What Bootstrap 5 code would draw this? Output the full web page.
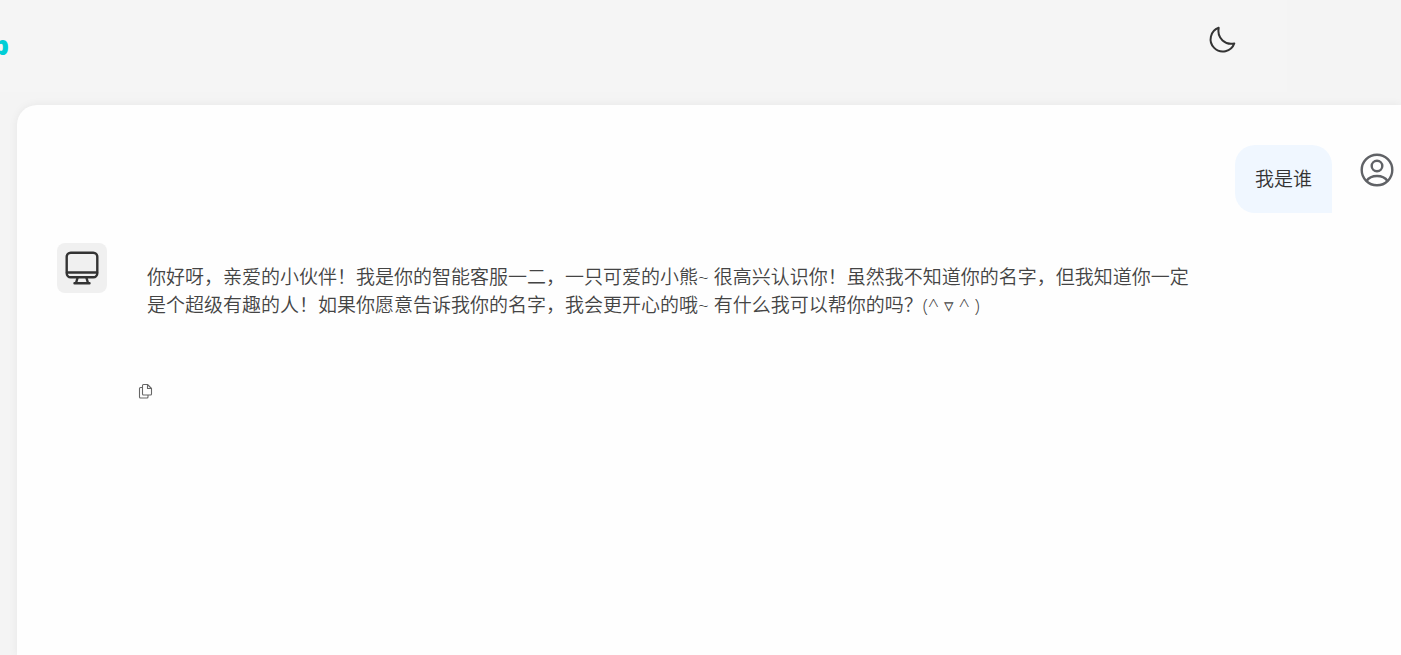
<!DOCTYPE html>
<html lang="zh-CN">
<head>
<meta charset="utf-8">
<meta name="viewport" content="width=device-width, initial-scale=1">
<title>智能客服</title>
<link href="https://cdn.jsdelivr.net/npm/bootstrap@5.3.0/dist/css/bootstrap.min.css" rel="stylesheet">
<style>
body{background:#f4f4f4;color:#333;font-family:"Open Sans","Noto Sans CJK SC",sans-serif;font-size:19px;line-height:28px}
.topbar{height:92px;background:#f5f5f5;margin-right:114px;padding-right:50px}
.brand{width:9px;color:#00ced6;font-size:26px;font-weight:800;line-height:28px;padding-bottom:2px;text-decoration:none}
.icon-btn{border:0;background:none;padding:0;line-height:0;color:#333}
.chat{margin:13px 0 0 17px;padding:40px 7px 24px 40px;background:#fefefe;border-top-left-radius:20px;box-shadow:0 0 10px rgba(0,0,0,.06)}
.bubble{background:#f0f7ff;border-radius:20px 20px 0 20px;padding:20px}
.message-text{font-weight:350;color:#333}
.answer{margin-top:30px;gap:20px}
.avatar{width:50px;height:50px;background:#f0f0f0;border-radius:8px}
.reply{max-width:1092px;padding:20px;color:#444}
.user-icon{margin:8px 0 0 28px;color:#606266;line-height:0}
.copy{margin:44px 0 0 81px;color:#666}
</style>
</head>
<body class="min-vh-100 d-flex flex-column overflow-x-hidden">
<header class="topbar d-flex justify-content-between">
  <a class="brand d-flex justify-content-end align-self-center" href="#">p</a>
  <button class="icon-btn align-self-start mt-4" type="button" aria-label="深色模式">
    <svg width="30" height="30" viewBox="0 0 30 30" fill="none" stroke="currentColor" stroke-width="2" stroke-linejoin="round"><path d="M11.700 3.800A12.200 12.200 0 1 0 27.300 19.400C19 21.500 9.500 14.500 11.700 3.800Z"/></svg>
  </button>
</header>
<main class="chat flex-grow-1">
  <div class="d-flex justify-content-end align-items-start">
    <div class="bubble message-text">我是谁</div>
    <div class="user-icon"><svg width="34" height="34" viewBox="0 0 34 34" fill="none" stroke="currentColor" stroke-width="2.400"><circle cx="17" cy="17" r="15.300"/><circle cx="17" cy="13" r="5.300"/><path d="M6.500 28c4.500-6.700 16.500-6.700 21 0"/></svg></div>
  </div>
  <div class="answer d-flex align-items-start">
    <div class="avatar d-flex flex-shrink-0 align-items-center justify-content-center">
      <svg width="34" height="34" viewBox="0 0 34 34" fill="none" stroke="currentColor" stroke-width="2.400" stroke-linejoin="round" stroke-linecap="round"><rect x="1.700" y="1.700" width="30.600" height="24.600" rx="4"/><path d="M2 21.500h30M12.500 27l-1.500 5M21.500 27l1.500 5M9.500 32.300h15"/></svg>
    </div>
    <div class="reply message-text">你好呀，亲爱的小伙伴！我是你的智能客服一二，一只可爱的小熊~ 很高兴认识你！虽然我不知道你的名字，但我知道你一定是个超级有趣的人！如果你愿意告诉我你的名字，我会更开心的哦~ 有什么我可以帮你的吗？(^ ▿ ^ )</div>
  </div>
  <button class="icon-btn copy" type="button" aria-label="复制">
    <svg width="15" height="16" viewBox="0 0 15 16" fill="none" stroke="currentColor" stroke-width="1.100" stroke-linejoin="round"><path d="M6 1.500h3.500l4 4v5.500q0 1-1 1h-7q-1 0-1-1v-8.500q0-1 1-1ZM9.500 1.500v4h4M4.500 4.500h-2q-1 0-1 1v8.500q0 1 1 1h6.500q1 0 1-1v-2"/></svg>
  </button>
</main>
<script src="https://cdn.jsdelivr.net/npm/bootstrap@5.3.0/dist/js/bootstrap.bundle.min.js"></script>
</body>
</html>
